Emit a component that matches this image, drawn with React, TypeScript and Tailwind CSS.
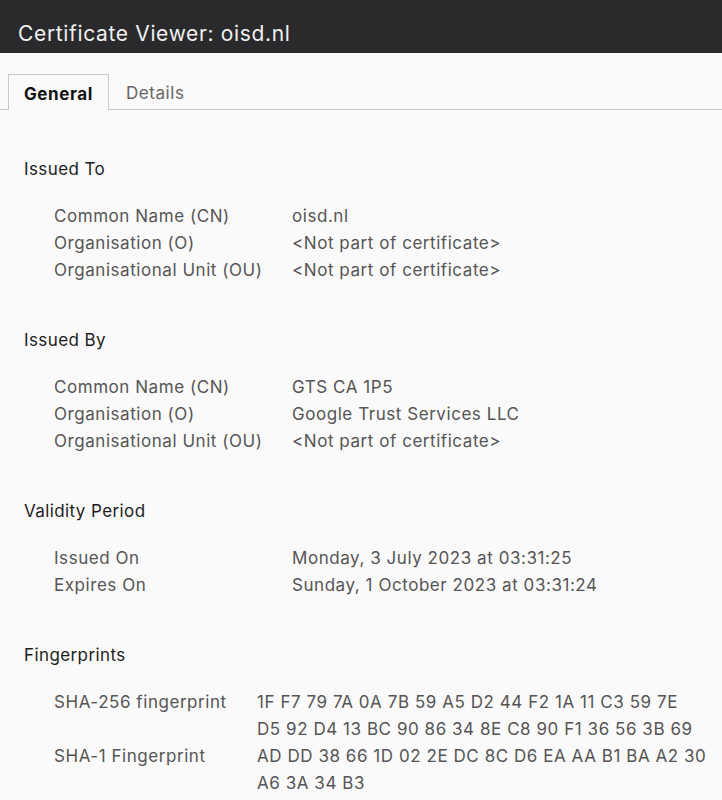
const SECTIONS = [
  {
    title: "Issued To",
    rows: [
      ["Common Name (CN)", "oisd.nl"],
      ["Organisation (O)", "<Not part of certificate>"],
      ["Organisational Unit (OU)", "<Not part of certificate>"]
    ]
  },
  {
    title: "Issued By",
    rows: [
      ["Common Name (CN)", "GTS CA 1P5"],
      ["Organisation (O)", "Google Trust Services LLC"],
      ["Organisational Unit (OU)", "<Not part of certificate>"]
    ]
  },
  {
    title: "Validity Period",
    rows: [
      ["Issued On", "Monday, 3 July 2023 at 03:31:25"],
      ["Expires On", "Sunday, 1 October 2023 at 03:31:24"]
    ]
  }
];

const FINGERPRINTS = [
  ["SHA-256 fingerprint", ["1F F7 79 7A 0A 7B 59 A5 D2 44 F2 1A 11 C3 59 7E", "D5 92 D4 13 BC 90 86 34 8E C8 90 F1 36 56 3B 69"]],
  ["SHA-1 Fingerprint", ["AD DD 38 66 1D 02 2E DC 8C D6 EA AA B1 BA A2 30", "A6 3A 34 B3"]]
] as const;

function Section({ title, first, children }: { title: string; first?: boolean; children: React.ReactNode }) {
  return (
    <section className={first ? "mt-[46px]" : "mt-[43px]"}>
      <h2 className="pl-6 text-[17px] leading-[27px] tracking-[0.4px] text-[#1d1d1d]">{title}</h2>
      <div className="mt-[20px] pl-[54px]">{children}</div>
    </section>
  );
}

export default function App() {
  return (
    <div className="h-[800px] w-[722px] overflow-hidden bg-[#fafafa] font-['Inter',sans-serif]">
      {/* Title bar */}
      <div className="flex h-[53px] items-end bg-[#2a2a2c] px-[18px] pb-[4px]">
        <h1 className="text-[21px] leading-[30px] tracking-[0.65px] text-[#f0f0f0]">Certificate Viewer: oisd.nl</h1>
      </div>

      {/* Tabs */}
      <div className="mt-[22px] flex h-[35px] items-end border-b border-[#c9c9c9] pl-2">
        <div className="-mb-px flex h-[36px] w-[101px] items-center justify-center border border-b-0 border-[#c9c9c9] bg-[#fafafa] pt-[4px] text-[17px] font-bold tracking-[0.6px] text-[#111]">
          General
        </div>
        <div className="flex h-[35px] items-center pl-[17px] pt-[4px] text-[17px] tracking-[0.55px] text-[#666]">Details</div>
      </div>

      {SECTIONS.map((s, i) => (
        <Section key={s.title} title={s.title} first={i === 0}>
          {s.rows.map(([k, v]) => (
            <div key={k} className="flex text-[17px] leading-[27px] tracking-[0.55px] text-[#555]">
              <div className="w-[238px] shrink-0">{k}</div>
              <div>{v}</div>
            </div>
          ))}
        </Section>
      ))}

      <Section title="Fingerprints">
        {FINGERPRINTS.map(([k, lines]) => (
          <div key={k} className="flex text-[17px] leading-[27px] tracking-[0.55px] text-[#555]">
            <div className="w-[203px] shrink-0">{k}</div>
            <div>
              {lines.map((l) => (
                <div key={l}>{l}</div>
              ))}
            </div>
          </div>
        ))}
      </Section>
    </div>
  );
}
